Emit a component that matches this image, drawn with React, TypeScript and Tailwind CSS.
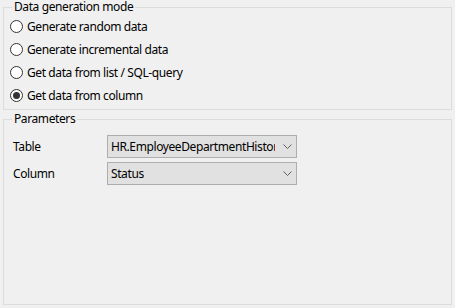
import React from "react";

function Radio({ label, checked }: { label: string; checked?: boolean }) {
  return (
    <div className="h-[23px] flex items-center pl-[6px]">
      <span className="w-[13px] h-[13px] rounded-full border border-[#333333] bg-white flex items-center justify-center shrink-0">
        {checked && <span className="w-[7px] h-[7px] rounded-full bg-[#333333]" />}
      </span>
      <span className="ml-[4px] leading-[15px]">{label}</span>
    </div>
  );
}

function Chevron() {
  return (
    <svg width="9" height="5" viewBox="0 0 9 5" className="shrink-0">
      <path d="M0.5 0.5 L4.5 4.5 L8.5 0.5" fill="none" stroke="#606060" strokeWidth="1" />
    </svg>
  );
}

function Combo({ value }: { value: string }) {
  return (
    <div className="w-[190px] h-[23px] border border-[#adadad] bg-[#e1e1e1] flex items-center pl-[3px] pr-[4px]">
      <span className="w-[164px] overflow-hidden whitespace-nowrap leading-[15px]">{value}</span>
      <span className="flex-1 flex justify-end">
        <Chevron />
      </span>
    </div>
  );
}

export default function App() {
  return (
    <div className="w-[455px] h-[308px] bg-[#f0f0f0] px-[3px] flex flex-col text-[12px] tracking-[-0.4px] text-black font-['Segoe_UI','Noto_Sans',sans-serif]">
      <fieldset className="h-[110px] border border-[#dcdcdc] p-0 m-0 min-w-0">
        <legend className="ml-[8px] px-[2px] leading-[14px]">Data generation mode</legend>
        <div className="mt-[1px] flex flex-col">
          <Radio label="Generate random data" />
          <Radio label="Generate incremental data" />
          <Radio label="Get data from list / SQL-query" />
          <Radio label="Get data from column" checked />
        </div>
      </fieldset>
      <fieldset className="mt-[2px] h-[193px] border border-[#dcdcdc] p-0 m-0 min-w-0">
        <legend className="ml-[8px] px-[2px] leading-[14px]">Parameters</legend>
        <div className="mt-[9px] flex flex-col gap-[4px]">
          <div className="flex items-center">
            <span className="w-[103px] pl-[9px] leading-[15px]">Table</span>
            <Combo value="HR.EmployeeDepartmentHistory" />
          </div>
          <div className="flex items-center">
            <span className="w-[103px] pl-[9px] leading-[15px]">Column</span>
            <Combo value="Status" />
          </div>
        </div>
      </fieldset>
    </div>
  );
}
